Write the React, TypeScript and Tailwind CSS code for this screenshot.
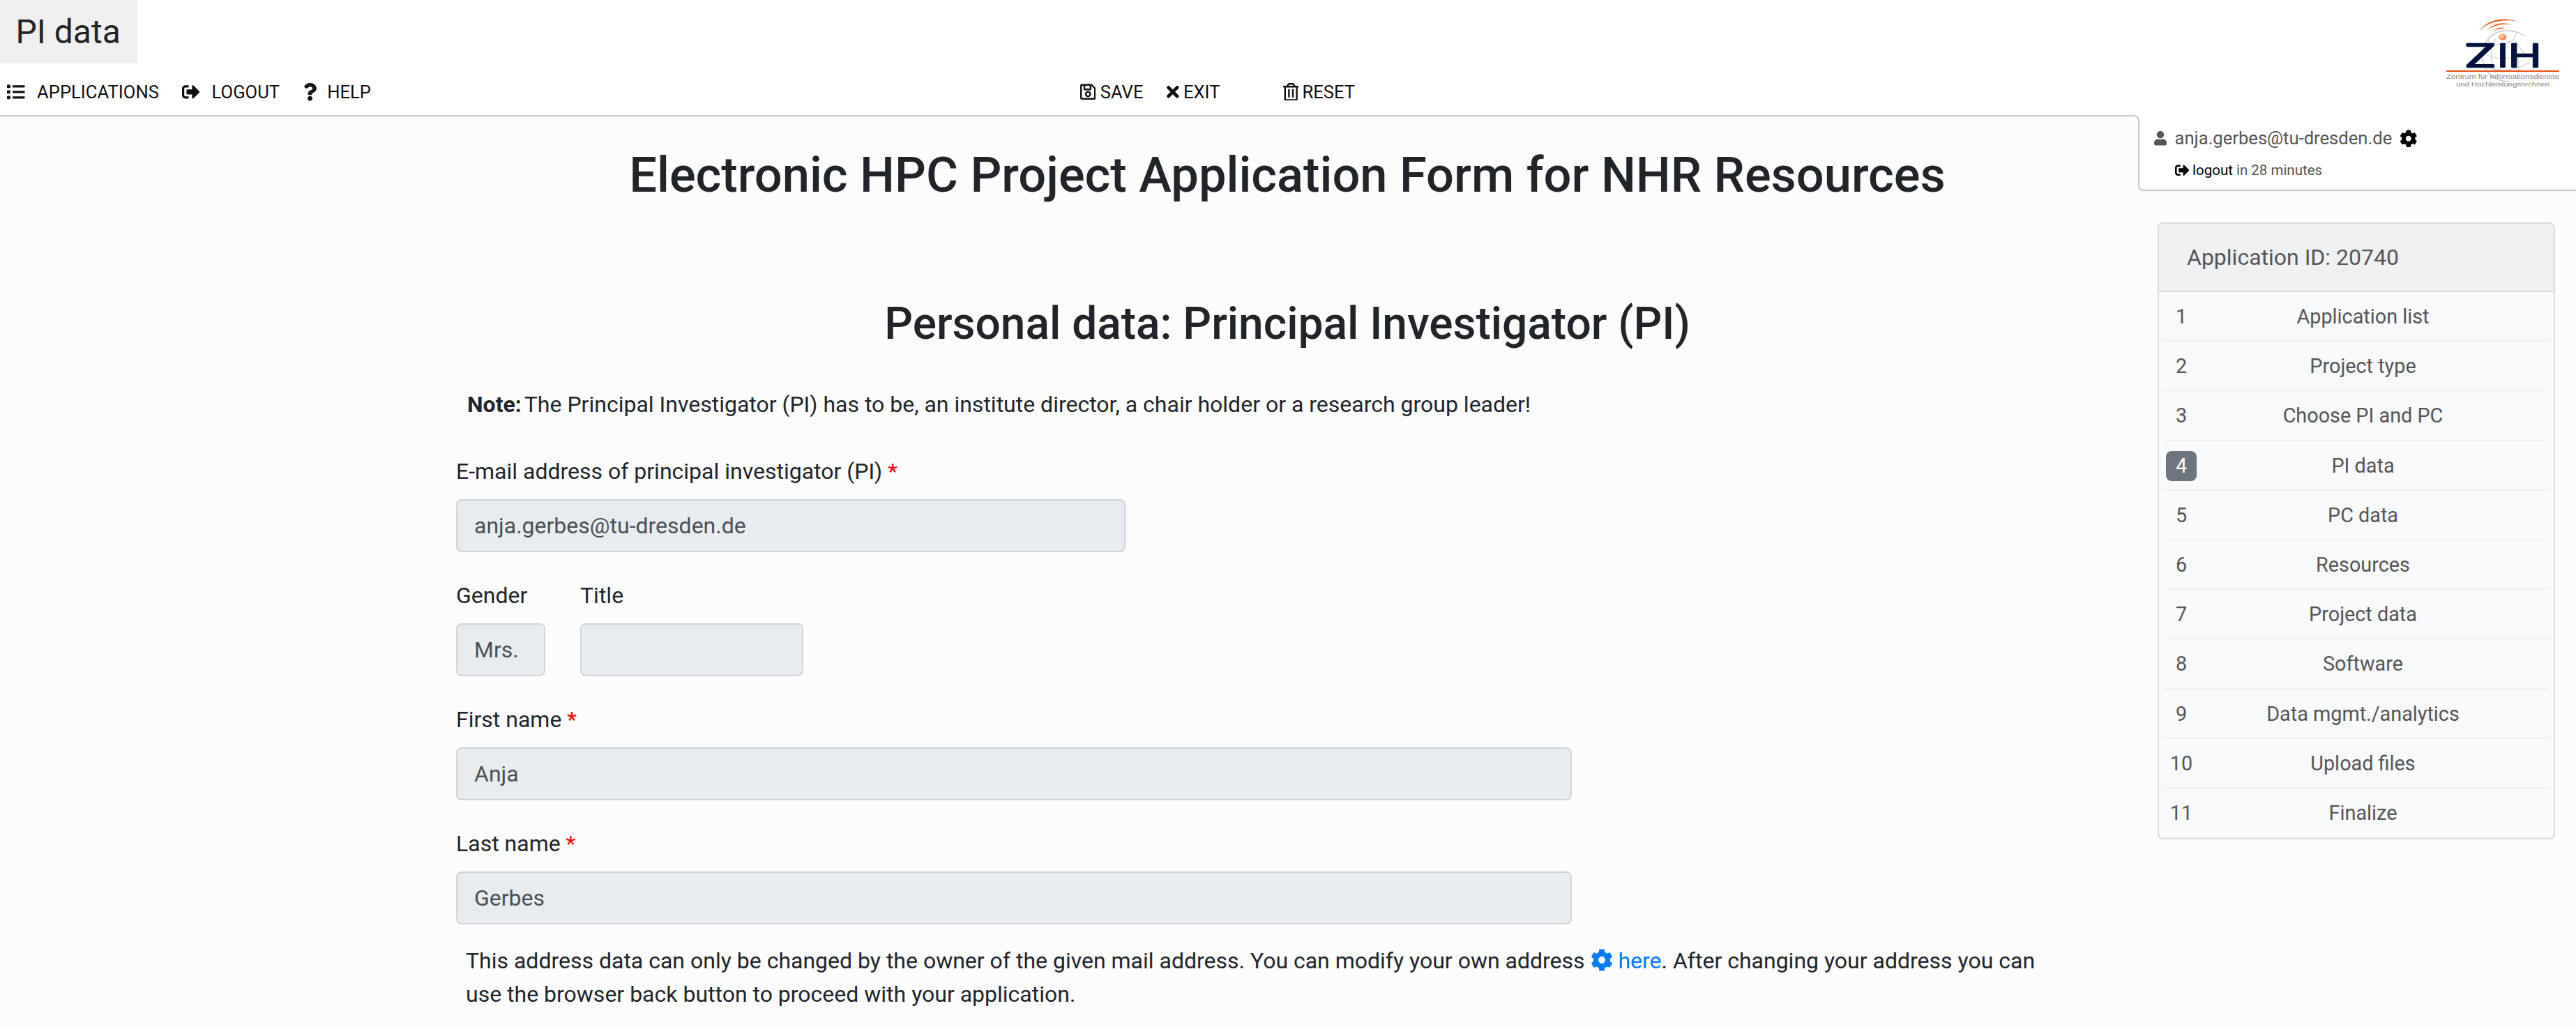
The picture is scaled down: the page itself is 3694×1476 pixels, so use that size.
import React from "react";
import {
  FaCog,
  FaList,
  FaQuestion,
  FaRegSave,
  FaRegTrashAlt,
  FaSignOutAlt,
  FaTimes,
  FaUser,
} from "react-icons/fa";

const STEPS = [
  "Application list",
  "Project type",
  "Choose PI and PC",
  "PI data",
  "PC data",
  "Resources",
  "Project data",
  "Software",
  "Data mgmt./analytics",
  "Upload files",
  "Finalize",
];
const CURRENT_STEP = 4;

function Logo() {
  return (
    <svg viewBox="84 50 486 300" className="mt-[26px] mr-[24px] h-[100px] w-[162px] shrink-0">
      <defs>
        <radialGradient id="ball" cx="0.4" cy="0.35" r="0.7">
          <stop offset="0" stopColor="#ffd9b8" />
          <stop offset="0.5" stopColor="#f9a56b" />
          <stop offset="1" stopColor="#e8753a" />
        </radialGradient>
        <linearGradient id="wave" x1="0" y1="0" x2="1" y2="0">
          <stop offset="0" stopColor="#f58a5a" />
          <stop offset="0.5" stopColor="#f4500f" />
          <stop offset="1" stopColor="#f58a5a" />
        </linearGradient>
      </defs>
      <g fill="none" stroke="#cccccc" strokeLinecap="round">
        <path d="M418 125C370 95 310 98 275 128C240 160 230 220 250 262C268 300 310 325 352 322" strokeWidth="5" />
        <path d="M384 118C386 140 360 160 318 164C290 166 262 156 264 142" strokeWidth="3.5" />
        <path d="M296 140C270 180 272 240 296 285" strokeWidth="4" />
        <path d="M352 150C390 190 402 240 392 290" strokeWidth="3.5" />
        <path d="M380 150C405 180 420 205 428 215" strokeWidth="3.5" />
        <path d="M246 200C290 228 350 232 392 212" strokeWidth="3" />
        <path d="M262 262C320 282 390 276 440 240" strokeWidth="3.5" />
      </g>
      <g fill="url(#wave)">
        <path d="M225 104C262 56 330 42 397 66C332 50 268 64 225 104Z" />
        <path d="M257 105C288 70 330 64 370 80C328 71 292 80 257 105Z" />
        <path d="M288 106C306 88 322 87 342 95C322 92 306 96 288 106Z" />
      </g>
      <ellipse cx="326" cy="131" rx="17" ry="14" fill="url(#ball)" />
      <g
        fill="#06133f"
        stroke="#06133f"
        strokeWidth="8"
        strokeLinejoin="round"
        fontSize="135"
        className="font-[Inter] font-light"
      >
        <text x="161" y="260" textLength="138" lengthAdjust="spacingAndGlyphs">Z</text>
        <text x="303" y="260" textLength="48" lengthAdjust="spacingAndGlyphs">I</text>
        <text x="350" y="260" textLength="143" lengthAdjust="spacingAndGlyphs">H</text>
      </g>
      <rect x="84" y="275" width="486" height="6" fill="#f0500f" />
      <g fill="#858585" fontSize="27" className="font-['Liberation_Sans']">
        <text x="84" y="312" textLength="486" lengthAdjust="spacingAndGlyphs">
          Zentrum für Informationsdienste
        </text>
        <text x="126" y="344" textLength="402" lengthAdjust="spacingAndGlyphs">
          und Hochleistungsrechnen
        </text>
      </g>
    </svg>
  );
}

function Header() {
  return (
    <header className="flex h-[165px] items-start justify-between bg-white">
      <div className="flex flex-col">
        <div className="h-[91px] w-[197px] bg-[#efefef] pt-[10px] pl-[22.5px] text-5xl leading-[72px]">
          PI data
        </div>
        <nav className="flex text-[25.6px] leading-[38px] text-[#111]">
          <div className="mt-[22px] flex w-[1549px] items-center pl-[10px]">
            <a className="flex w-[251px] items-center gap-[17.5px]">
              <FaList className="h-[25.6px] w-[25.6px]" />
              APPLICATIONS
            </a>
            <a className="flex w-[174px] items-center gap-[17px]">
              <FaSignOutAlt className="h-[25.6px] w-[25.6px]" />
              LOGOUT
            </a>
            <a className="flex items-center gap-[15px]">
              <FaQuestion className="h-[25.6px] w-[19.2px]" />
              HELP
            </a>
          </div>
          <div className="mt-[21px] flex items-center">
            <a className="flex w-[124px] items-center gap-[6.4px]">
              <FaRegSave className="h-[25.6px] w-[22.4px]" />
              SAVE
            </a>
            <a className="flex w-[166.5px] items-center gap-[6.4px]">
              <FaTimes className="h-[25.6px] w-[17.6px]" />
              EXIT
            </a>
            <a className="flex items-center gap-[5.5px]">
              <FaRegTrashAlt className="h-[25.6px] w-[22.4px]" />
              RESET
            </a>
          </div>
        </nav>
      </div>
      <Logo />
    </header>
  );
}

function Label({ text, required }: { text: string; required?: boolean }) {
  return (
    <label className="mb-4 block">
      {text}
      {required && <span className="text-[#ff0000]"> *</span>}
    </label>
  );
}

function Field({
  label,
  value,
  width,
  required,
}: {
  label: string;
  value: string;
  width: string;
  required?: boolean;
}) {
  return (
    <div className={width}>
      <Label text={label} required={required} />
      <div className="h-[76px] rounded-lg border-2 border-[#ced4da] bg-[#e9ecef] px-6 py-3 text-[#495057]">
        {value}
      </div>
    </div>
  );
}

function PersonalDataForm() {
  return (
    <main className="ml-[654px] w-[2384px] text-[32px] leading-[48px]">
      <h1 className="text-center text-[70.4px] leading-[84px] font-medium">
        Electronic HPC Project Application Form for NHR Resources
      </h1>
      <h2 className="mt-[133px] text-center text-[64px] leading-[77px] font-medium">
        Personal data: Principal Investigator (PI)
      </h2>
      <p className="mt-[53px] ml-4 flex gap-1">
        <strong className="font-bold">Note:</strong>
        <span>
          The Principal Investigator (PI) has to be, an institute director, a chair holder or a
          research group leader!
        </span>
      </p>
      <form className="mt-[48px] flex flex-col gap-[38px]">
        <Field
          label="E-mail address of principal investigator (PI)"
          value="anja.gerbes@tu-dresden.de"
          width="w-[960px]"
          required
        />
        <div className="flex gap-[50px]">
          <Field label="Gender" value="Mrs." width="w-[128px]" />
          <Field label="Title" value="" width="w-[320px]" />
        </div>
        <Field label="First name" value="Anja" width="w-[1600px]" required />
        <Field label="Last name" value="Gerbes" width="w-[1600px]" required />
      </form>
      <p className="mt-[28px] ml-[14px] w-[2290px]">
        This address data can only be changed by the owner of the given mail address. You can
        modify your own address{" "}
        <a className="text-[#007bff]">
          <FaCog className="inline-block h-8 w-8 align-[-4px]" /> here
        </a>
        . After changing your address you can use the browser back button to proceed with your
        application.
      </p>
    </main>
  );
}

function SessionPanel() {
  return (
    <div className="-ml-[2px] h-[109px] rounded-bl-lg bg-white pt-[10px]">
      <div className="h-[99px] rounded-bl-lg border-b-2 border-l-2 border-[#c3cacd] pt-[3px] text-[#555]">
        <div className="flex items-center pl-[21px] text-[25.6px] leading-[41px]">
          <FaUser className="h-[20.5px] w-[18px]" />
          <span className="ml-[11.5px]">anja.gerbes@tu-dresden.de</span>
          <FaCog className="ml-[10.5px] h-[25.6px] w-[25.6px] text-black" />
        </div>
        <div className="mt-[9px] flex items-center gap-[5px] pl-[50.5px] text-[20.5px] leading-[33px]">
          <FaSignOutAlt className="h-[20.5px] w-[20.5px] text-black" />
          <span className="text-black">logout</span>
          <span>in 28 minutes</span>
        </div>
      </div>
    </div>
  );
}

function StepList() {
  return (
    <section className="mt-[45px] ml-[26px] w-[570px] overflow-hidden rounded-lg border-2 border-[#d8dadc] bg-[#f8f9fb] text-[#555]">
      <div className="border-b-2 border-[#d4d6d8] bg-[#eff0f2] py-6 pl-[40px] text-[32px] leading-[48px]">
        Application ID: 20740
      </div>
      <ol className="mx-[3px] text-[28.8px] leading-[46px]">
        {STEPS.map((step, i) => (
          <li
            key={step}
            className="flex h-[71.2px] rounded-b-lg border-b-2 border-[#eeeff1] pt-[12px]"
          >
            <div className="flex w-[58px] justify-center">
              {i + 1 === CURRENT_STEP ? (
                <span className="mt-[2px] h-[43px] w-[44px] rounded-lg bg-[#6c757d] text-center leading-[42px] text-white">
                  {i + 1}
                </span>
              ) : (
                <span>{i + 1}</span>
              )}
            </div>
            <div className="w-[463px] text-center">{step}</div>
          </li>
        ))}
      </ol>
    </section>
  );
}

export default function App() {
  return (
    <div className="h-[1476px] w-[3694px] overflow-hidden bg-[#fcfcfc] font-[Roboto,sans-serif] text-[#212529]">
      <Header />
      <div className="flex">
        <div className="z-10 w-[3068px] shrink-0">
          <div className="bg-white">
            <div className="h-[44px] rounded-tr-lg border-t-2 border-r-2 border-[#c3cacd] bg-[#fcfcfc]" />
          </div>
          <PersonalDataForm />
        </div>
        <aside className="w-[626px]">
          <SessionPanel />
          <StepList />
        </aside>
      </div>
    </div>
  );
}
